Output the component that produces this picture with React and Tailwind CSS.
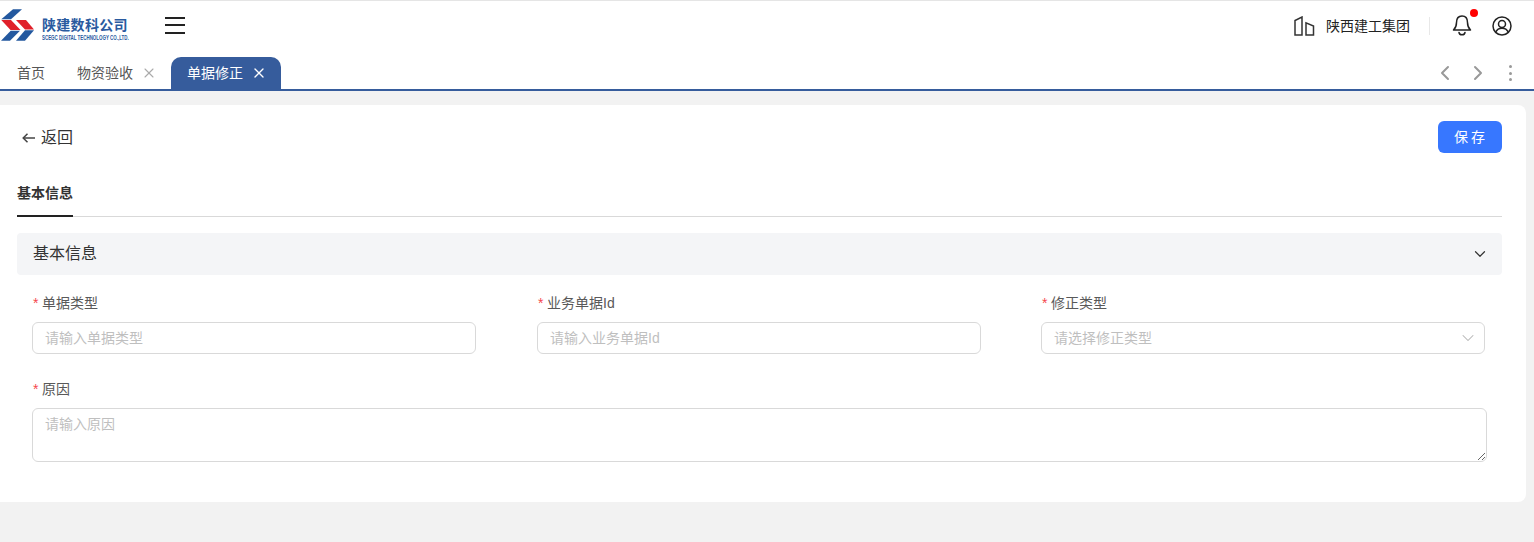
import { useState } from 'react';
import { ChevronDown, ChevronLeft, ChevronRight, X } from 'lucide-react';

function Brand() {
  return (
    <div className="flex h-[41px] items-start">
      <svg width="35" height="33" viewBox="0 9 35 33" className="shrink-0">
        <polygon points="13,9.300 22,9.300 11,19.300 1.300,19.300" fill="#23589f" />
        <polygon points="1.300,20 11,20 20.500,30 10.500,30" fill="#e0202a" />
        <polygon points="16,20 26,20 34,29.500 25,29.500" fill="#e0202a" />
        <polygon points="1,40.700 10,40.700 20,30.700 10.700,30.700" fill="#23589f" />
        <polygon points="16,40.700 25,40.700 34,30.200 25,30.200" fill="#23589f" />
      </svg>
      <div className="ml-[7px] flex w-[88px] flex-col pt-[7px]">
        <span className="text-[14px] leading-[18px] font-bold tracking-[0.3px] text-[#2a5a9f]">陕建数科公司</span>
        <span className="mt-[1px] origin-left scale-y-150 text-[4.45px] leading-[6px] font-bold whitespace-nowrap text-[#2a5a9f]">
          SCEGC DIGITAL TECHNOLOGY CO.,LTD.
        </span>
      </div>
    </div>
  );
}

function Label({ children }) {
  return (
    <div className="flex h-[22px] items-center text-[14px] text-[#595959]">
      <span className="w-[10px] shrink-0 pl-[1px] text-[#f5484d]">*</span>
      {children}
    </div>
  );
}

function Field({ label, placeholder, select }) {
  return (
    <div className="w-[444px]">
      <Label>{label}</Label>
      <div className="mt-[8px] flex h-[32px] items-center justify-between rounded-[6px] border border-[#d9d9d9] bg-white pr-[6px] pl-[12px]">
        <input
          readOnly
          placeholder={placeholder}
          className="w-full bg-transparent text-[14px] outline-none placeholder:text-[#bfbfbf]"
        />
        {select && <ChevronDown size={20} strokeWidth={1.25} className="shrink-0 text-[#b5b5b5]" />}
      </div>
    </div>
  );
}

export default function App() {
  const [tabs] = useState([
    { name: '首页' },
    { name: '物资验收', close: true },
    { name: '单据修正', close: true, active: true },
  ]);

  return (
    <div
      className="flex h-[542px] flex-col overflow-hidden bg-[#f2f2f2]"
      style={{ fontFamily: '"Liberation Sans", "Noto Sans CJK SC", sans-serif' }}
    >
      <header className="bg-white">
        <div className="flex h-[57px] items-start justify-between border-t border-[#e5e5e5]">
          <div className="flex items-start pt-[8px]">
            <Brand />
            <div className="mt-[7.5px] ml-[35px] flex w-[20px] flex-col gap-[5.5px]">
              <span className="h-[2px] bg-[#222]" />
              <span className="h-[2px] bg-[#222]" />
              <span className="h-[2px] bg-[#222]" />
            </div>
          </div>
          <div className="flex items-center pt-[14px] pr-[22px]">
            <svg width="22" height="20" viewBox="0 0 22 20" fill="none" stroke="#333" strokeWidth="1.5">
              <path d="M2 19V4.500L9 1V19Z" />
              <path d="M13 19V6.800L20.500 10V19Z" />
            </svg>
            <span className="ml-[11px] text-[14px] leading-[20px] text-[#222]">陕西建工集团</span>
            <span className="mr-[22px] ml-[19px] h-[18px] w-px bg-[#e8e8e8]" />
            <div className="relative">
              <svg width="20" height="22" viewBox="0 0 20 22" fill="none" stroke="#222" strokeWidth="1.5" strokeLinecap="round">
                <path d="M10 1c-3.600 0-5.500 2.800-5.500 6.500 0 4-1.300 6-3 7.600h17c-1.700-1.600-3-3.600-3-7.600 0-3.700-1.900-6.500-5.500-6.500Z" strokeLinejoin="round" />
                <path d="M7 17.500c.3 1.600 1.400 2.300 3 2.300s2.700-.7 3-2.300" />
              </svg>
              <span className="absolute -top-[6px] -right-[6px] h-[8px] w-[8px] rounded-full bg-[#f00]" />
            </div>
            <svg width="20" height="20" viewBox="0 0 20 20" fill="none" stroke="#222" strokeWidth="1.5" className="ml-[20px]">
              <circle cx="10" cy="10" r="9" />
              <circle cx="10" cy="8" r="3.500" />
              <path d="M3.800 16c1-2.300 3.300-3.800 6.200-3.800s5.200 1.500 6.200 3.800" />
            </svg>
          </div>
        </div>
        <div className="flex h-[34px] items-end justify-between border-b-2 border-[#365c9c]">
          <div className="flex h-[32px] items-stretch pl-[1px]">
            {tabs.map((tab) =>
              tab.active ? (
                <div key={tab.name} className="flex w-[110px] items-center rounded-t-[10px] bg-[#365c9c] pl-[16px] text-[14px] text-white">
                  {tab.name}
                  <X size={16} strokeWidth={2} className="ml-[8px]" />
                </div>
              ) : (
                <div key={tab.name} className={`flex items-center text-[14px] text-[#555] ${tab.close ? 'w-[110px] pl-[16px]' : 'w-[60px] pl-[16px]'}`}>
                  {tab.name}
                  {tab.close && <X size={16} strokeWidth={1.6} className="ml-[8px] text-[#aaa]" />}
                </div>
              ),
            )}
          </div>
          <div className="flex h-[32px] items-center pr-[22px] text-[#999]">
            <ChevronLeft size={24} strokeWidth={2} />
            <ChevronRight size={24} strokeWidth={2} className="ml-[9px]" />
            <div className="ml-[19px] flex flex-col gap-[3.5px]">
              <span className="h-[3px] w-[3px] rounded-full bg-[#999]" />
              <span className="h-[3px] w-[3px] rounded-full bg-[#999]" />
              <span className="h-[3px] w-[3px] rounded-full bg-[#999]" />
            </div>
          </div>
        </div>
      </header>

      <main className="mt-[14px] mr-[8px] h-[397px] rounded-r-[8px] bg-white px-[17px] pr-[24px]">
        <div className="flex h-[64px] items-start justify-between pt-[16px]">
          <div className="flex h-[32px] items-center pt-[1px] pl-[5px] text-[16px] text-[#333]">
            <svg width="13" height="10" viewBox="0 0 13 10" fill="none" stroke="#444" strokeWidth="1.5" className="mr-[6px]">
              <path d="M13 5H1.500" />
              <path d="M5.500 .7 1.200 5l4.300 4.300" />
            </svg>
            返回
          </div>
          <button className="h-[32px] w-[64px] rounded-[6px] bg-[#3777ff] pl-[2px] text-[14px] tracking-[3px] text-white">保存</button>
        </div>
        <div className="h-[48px] border-b border-[#d9d9d9]">
          <div className="flex h-[48px] w-[56px] items-center justify-center border-b-2 border-[#222] pt-[2px] text-[14px] font-bold text-[#333]">
            基本信息
          </div>
        </div>
        <div className="mt-[16px] flex h-[42px] items-center justify-between rounded-[4px] bg-[#f4f5f7] pr-[13px] pl-[16px] text-[16px] text-[#333]">
          基本信息
          <ChevronDown size={18} strokeWidth={1.6} className="text-[#333]" />
        </div>
        <div className="mt-[17px] pl-[15px]">
          <div className="grid grid-cols-[505px_504px_444px]">
            <Field label="单据类型" placeholder="请输入单据类型" />
            <Field label="业务单据Id" placeholder="请输入业务单据Id" />
            <Field label="修正类型" placeholder="请选择修正类型" select />
          </div>
          <div className="mt-[24px]">
            <Label>原因</Label>
            <textarea
              readOnly
              placeholder="请输入原因"
              className="mt-[8px] block h-[54px] w-[1455px] rounded-[6px] border border-[#d9d9d9] px-[12px] py-[5px] text-[14px] outline-none placeholder:text-[#bfbfbf]"
            />
          </div>
        </div>
      </main>
    </div>
  );
}
